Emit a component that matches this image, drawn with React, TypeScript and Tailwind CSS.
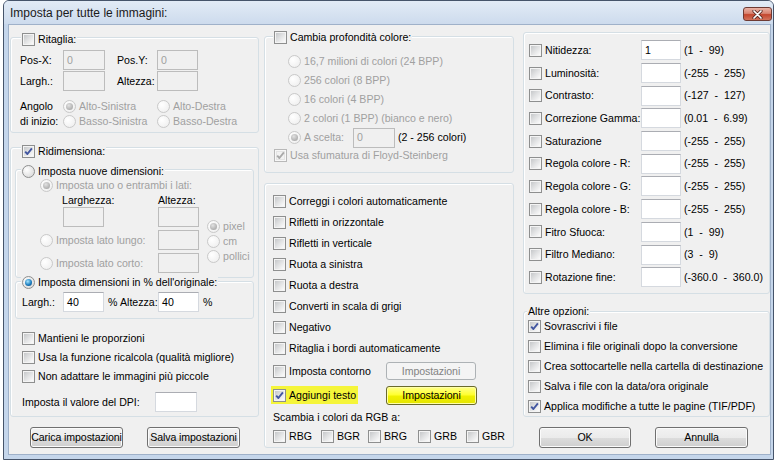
import React from "react";

const dis = "text-[#a0a0a0]";
const grp =
  "flex flex-col shrink-0 border border-[#d5dfe5] rounded-[3px] shadow-[inset_1px_1px_0_#ffffff]";

function Check({ checked = false, disabled = false }: { checked?: boolean; disabled?: boolean }) {
  return (
    <span
      className={`relative flex w-[13px] h-[13px] shrink-0 border p-[1px] ${
        disabled ? "border-[#b8b8b8] bg-[#f7f7f7]" : "border-[#8e8f8f] bg-[#f4f4f4]"
      }`}
    >
      <span
        className={`flex-1 ${
          disabled
            ? "bg-[#f2f2f2] border border-[#e4e4e4]"
            : "bg-[linear-gradient(135deg,#c6c8ca_0%,#e2e3e4_50%,#fbfbfb_100%)]"
        }`}
      />
      {checked && (
        <svg className="absolute left-[1px] top-[1px]" width="9" height="9" viewBox="0 0 9 9">
          <path
            d="M1.2 4.6 L3.4 7 L7.9 1.4"
            fill="none"
            stroke={disabled ? "#a9a9a9" : "#4256a0"}
            strokeWidth="1.9"
            strokeLinejoin="round"
          />
        </svg>
      )}
    </span>
  );
}

function Radio({ on = false, disabled = false }: { on?: boolean; disabled?: boolean }) {
  return (
    <span
      className={`flex items-center justify-center w-[13px] h-[13px] shrink-0 rounded-full border ${
        disabled
          ? "border-[#c9c9c9] bg-[radial-gradient(circle_at_35%_35%,#ffffff,#ececec)]"
          : "border-[#8e8f8f] bg-[radial-gradient(circle_at_35%_35%,#ffffff,#d3d3d3)]"
      }`}
    >
      {on && (
        <span
          className={`w-[7px] h-[7px] rounded-full ${
            disabled
              ? "bg-[radial-gradient(circle_at_40%_35%,#e2e2e2,#9a9a9a)]"
              : "bg-[radial-gradient(circle_at_40%_35%,#a8e6ff,#1d7fc0_55%,#0b3a6c)]"
          }`}
        />
      )}
    </span>
  );
}

function Opt({
  label,
  on = false,
  disabled = false,
  cls = "",
}: {
  label: string;
  on?: boolean;
  disabled?: boolean;
  cls?: string;
}) {
  return (
    <span className={`flex items-center gap-[3px] whitespace-nowrap ${cls}`}>
      <Radio on={on} disabled={disabled} />
      <span className={disabled ? dis : ""}>{label}</span>
    </span>
  );
}

function CbRow({
  label,
  checked = false,
  disabled = false,
  cls = "",
}: {
  label: string;
  checked?: boolean;
  disabled?: boolean;
  cls?: string;
}) {
  return (
    <div className={`flex items-center gap-[3px] whitespace-nowrap ${cls}`}>
      <Check checked={checked} disabled={disabled} />
      <span className={disabled ? dis : ""}>{label}</span>
    </div>
  );
}

function Box({ w, value = "", disabled = false, h = "h-[20px]" }: { w: string; value?: string; disabled?: boolean; h?: string }) {
  return (
    <span
      className={`flex items-center shrink-0 px-[3px] border ${h} ${w} ${
        disabled
          ? "border-[#bcbcbc] bg-[#f0f0f0] text-[#a0a0a0]"
          : "border-[#d5d9df] border-t-[#abadb3] bg-white text-black"
      }`}
    >
      {value}
    </span>
  );
}

function Btn({
  children,
  w,
  h = "h-[21px]",
  kind = "normal",
}: {
  children: React.ReactNode;
  w: string;
  h?: string;
  kind?: "normal" | "disabled" | "yellow";
}) {
  const k =
    kind === "disabled"
      ? "border-[#adb2b5] bg-[#f4f4f4] text-[#838383]"
      : kind === "yellow"
      ? "border-[#6a6a2c] bg-[linear-gradient(#ffff8c_0%,#ffff30_45%,#f0f000_55%,#e4e400_100%)] shadow-[inset_0_0_0_1px_#ffffa8]"
      : "border-[#707070] bg-[linear-gradient(#f2f2f2_0%,#ebebeb_50%,#dddddd_50%,#cfcfcf_100%)] shadow-[inset_0_0_0_1px_#fbfbfb]";
  return (
    <span
      className={`flex items-center justify-center shrink-0 whitespace-nowrap rounded-[3px] border tracking-[-0.1px] ${w} ${h} ${k}`}
    >
      {children}
    </span>
  );
}

function Adj({ label, value = "", range }: { label: string; value?: string; range: string }) {
  return (
    <div className="flex items-center h-[22.7px] whitespace-nowrap">
      <Check />
      <span className="ml-[3px] w-[96px]">{label}</span>
      <Box w="w-[40px]" value={value} />
      <span className="ml-[3px] whitespace-pre">{range}</span>
    </div>
  );
}

export default function App() {
  return (
    <div className="w-[778px] h-[461px] bg-white overflow-hidden font-['Liberation_Sans',Arial,sans-serif] text-[10.6px] text-black leading-none">
      <div className="ml-[3px] w-[771px] h-[460px] flex flex-col border border-[#46546a] rounded-t-[6px] bg-[#c5d6eb]">
        {/* title bar */}
        <div className="h-[23px] shrink-0 flex items-start rounded-t-[5px] bg-[linear-gradient(#e2ebf6,#cddbed)]">
          <span className="ml-[6px] mt-[6px] text-[12px] text-[#1a1a1a] whitespace-nowrap">
            Imposta per tutte le immagini:
          </span>
          <span className="ml-auto mr-[1px] mt-[6px] w-[29px] h-[14px] flex items-center justify-center rounded-[3px] border border-[#6e3a33] bg-[linear-gradient(#eab3a6_0%,#d98472_45%,#c4462e_55%,#d2735c_100%)]">
            <svg width="11" height="9" viewBox="0 0 11 9">
              <path d="M2 1 L9 8 M9 1 L2 8" stroke="#5a2a24" strokeWidth="3.2" strokeLinecap="round" />
              <path d="M2 1 L9 8 M9 1 L2 8" stroke="#ffffff" strokeWidth="1.7" strokeLinecap="round" />
            </svg>
          </span>
        </div>

        {/* client area */}
        <div className="ml-[4px] w-[763px] h-[431px] shrink-0 flex border border-[#9fb1c9] bg-[#f0f0f0] pl-[1px]">
          {/* LEFT COLUMN */}
          <div className="w-[249px] shrink-0 flex flex-col">
            <div className={`${grp} mt-[12px] h-[96px]`}>
              <div className="-mt-[5px] ml-[10px] w-fit px-[1px] h-[13px] flex items-center gap-[3px] bg-[#f0f0f0]">
                <Check />
                <span>Ritaglia:</span>
              </div>
              <div className="mt-[4px] ml-[9px] flex items-center h-[20px]">
                <span className="w-[43px]">Pos-X:</span>
                <Box w="w-[42px]" value="0" disabled />
                <span className="ml-[12px] w-[40px]">Pos.Y:</span>
                <Box w="w-[41px]" value="0" disabled />
              </div>
              <div className="mt-[1px] ml-[9px] flex items-center h-[20px]">
                <span className="w-[43px]">Largh.:</span>
                <Box w="w-[42px]" disabled />
                <span className="ml-[12px] w-[40px]">Altezza:</span>
                <Box w="w-[41px]" disabled />
              </div>
              <div className="mt-[8px] ml-[9px] grid grid-cols-[43px_94px_auto] grid-rows-[15px_15px] items-center">
                <span>Angolo</span>
                <Opt label="Alto-Sinistra" on disabled />
                <Opt label="Alto-Destra" disabled />
                <span className="whitespace-nowrap">di inizio:</span>
                <Opt label="Basso-Sinistra" disabled />
                <Opt label="Basso-Destra" disabled />
              </div>
            </div>

            <div className={`${grp} mt-[14px] h-[270px]`}>
              <div className="-mt-[3px] ml-[10px] w-fit px-[1px] h-[13px] flex items-center gap-[3px] bg-[#f0f0f0]">
                <Check checked />
                <span>Ridimensiona:</span>
              </div>

              <div className={`${grp} mt-[11px] mx-[4px] h-[109px]`}>
                <div className="-mt-[5px] ml-[5px] w-fit px-[1px] h-[13px] flex items-center bg-[#f0f0f0]">
                  <Opt label="Imposta nuove dimensioni:" />
                </div>
                <div className="h-[15px] pl-[24px] flex items-center">
                  <Opt label="Imposta uno o entrambi i lati:" on disabled />
                </div>
                <div className="h-[14px] pl-[46px] flex items-center">
                  <span className="w-[96px]">Larghezza:</span>
                  <span>Altezza:</span>
                </div>
                <div className="flex">
                  <div className="pl-[24px] grid grid-cols-[118px_41px] grid-rows-[20px_20px_20px] gap-y-[3px] items-center">
                    <div className="pl-[23px]">
                      <Box w="w-[41px]" disabled />
                    </div>
                    <Box w="w-[41px]" disabled />
                    <Opt label="Imposta lato lungo:" disabled />
                    <Box w="w-[41px]" disabled />
                    <Opt label="Imposta lato corto:" disabled />
                    <Box w="w-[41px]" disabled />
                  </div>
                  <div className="ml-[8px] mt-[12px] flex flex-col">
                    <Opt label="pixel" on disabled cls="h-[15px]" />
                    <Opt label="cm" disabled cls="h-[15px]" />
                    <Opt label="pollici" disabled cls="h-[15px]" />
                  </div>
                </div>
              </div>

              <div className={`${grp} mt-[3px] mx-[4px] h-[38px]`}>
                <div className="-mt-[6px] ml-[5px] w-fit px-[1px] h-[13px] flex items-center bg-[#f0f0f0]">
                  <Opt label="Imposta dimensioni in % dell'originale:" on />
                </div>
                <div className="mt-[3px] h-[20px] pl-[6px] flex items-center whitespace-nowrap">
                  <span className="w-[41px]">Largh.:</span>
                  <Box w="w-[41px]" value="40" />
                  <span className="ml-[4px] w-[12px]">%</span>
                  <span className="w-[38px]">Altezza:</span>
                  <Box w="w-[41px]" value="40" />
                  <span className="ml-[4px]">%</span>
                </div>
              </div>

              <div className="mt-[10px] pl-[11px] flex flex-col">
                <CbRow label="Mantieni le proporzioni" cls="h-[19px]" />
                <CbRow label="Usa la funzione ricalcola (qualità migliore)" cls="h-[19px]" />
                <CbRow label="Non adattare le immagini più piccole" cls="h-[19px]" />
              </div>
              <div className="mt-[6px] pl-[11px] h-[20px] flex items-center">
                <span className="w-[133px] whitespace-nowrap">Imposta il valore del DPI:</span>
                <Box w="w-[42px]" />
              </div>
            </div>

            <div className="mt-[10px] pl-[20px] flex gap-[24px]">
              <Btn w="w-[93px]">Carica impostazioni</Btn>
              <Btn w="w-[93px]">Salva impostazioni</Btn>
            </div>
          </div>

          {/* MIDDLE COLUMN */}
          <div className="ml-[5px] w-[250px] shrink-0 flex flex-col">
            <div className={`${grp} mt-[11px] h-[137px]`}>
              <div className="-mt-[6px] ml-[8px] w-fit px-[1px] h-[13px] flex items-center gap-[3px] bg-[#f0f0f0]">
                <Check />
                <span>Cambia profondità colore:</span>
              </div>
              <div className="mt-[8px] pl-[23px] flex flex-col">
                <Opt label="16,7 milioni di colori (24 BPP)" disabled cls="h-[19px]" />
                <Opt label="256 colori (8 BPP)" disabled cls="h-[19px]" />
                <Opt label="16 colori (4 BPP)" disabled cls="h-[19px]" />
                <Opt label="2 colori (1 BPP) (bianco e nero)" disabled cls="h-[19px]" />
                <div className="h-[19px] flex items-center whitespace-nowrap">
                  <Radio on disabled />
                  <span className={`ml-[3px] w-[49px] ${dis}`}>A scelta:</span>
                  <Box w="w-[42px]" value="0" disabled />
                  <span className="ml-[3px]">(2 - 256 colori)</span>
                </div>
              </div>
              <CbRow label="Usa sfumatura di Floyd-Steinberg" checked disabled cls="h-[17px] pl-[9px]" />
            </div>

            <div className={`${grp} mt-[10px] h-[265px] pt-[7px] pl-[8px]`}>
              <CbRow label="Correggi i colori automaticamente" cls="h-[21px]" />
              <CbRow label="Rifletti in orizzontale" cls="h-[21px]" />
              <CbRow label="Rifletti in verticale" cls="h-[21px]" />
              <CbRow label="Ruota a sinistra" cls="h-[21px]" />
              <CbRow label="Ruota a destra" cls="h-[21px]" />
              <CbRow label="Converti in scala di grigi" cls="h-[21px]" />
              <CbRow label="Negativo" cls="h-[21px]" />
              <CbRow label="Ritaglia i bordi automaticamente" cls="h-[21px]" />
              <div className="h-[24px] flex items-center">
                <CbRow label="Imposta contorno" cls="w-[113px]" />
                <Btn w="w-[90px]" h="h-[18px]" kind="disabled">
                  Impostazioni
                </Btn>
              </div>
              <div className="h-[24px] flex items-center">
                <div className="w-[113px] flex">
                  <span className="-ml-[2px] px-[2px] h-[18px] flex items-center gap-[3px] bg-[#f5f53a] whitespace-nowrap">
                    <Check checked />
                    <span>Aggiungi testo</span>
                  </span>
                </div>
                <Btn w="w-[91px]" h="h-[19px]" kind="yellow">
                  Impostazioni
                </Btn>
              </div>
              <div className="h-[20px] flex items-center whitespace-nowrap">Scambia i colori da RGB a:</div>
              <div className="h-[18px] flex items-center">
                <CbRow label="RBG" cls="w-[48px]" />
                <CbRow label="BGR" cls="w-[47px]" />
                <CbRow label="BRG" cls="w-[50px]" />
                <CbRow label="GRB" cls="w-[48px]" />
                <CbRow label="GBR" />
              </div>
            </div>
          </div>

          {/* RIGHT COLUMN */}
          <div className="ml-[9px] w-[247px] shrink-0 flex flex-col">
            <div className={`${grp} mt-[7px] h-[262px] pt-[6px] pl-[5px]`}>
              <Adj label="Nitidezza:" value="1" range="(1  -  99)" />
              <Adj label="Luminosità:" range="(-255  -  255)" />
              <Adj label="Contrasto:" range="(-127  -  127)" />
              <Adj label="Correzione Gamma:" range="(0.01  -  6.99)" />
              <Adj label="Saturazione" range="(-255  -  255)" />
              <Adj label="Regola colore - R:" range="(-255  -  255)" />
              <Adj label="Regola colore - G:" range="(-255  -  255)" />
              <Adj label="Regola colore - B:" range="(-255  -  255)" />
              <Adj label="Fitro Sfuoca:" range="(1  -  99)" />
              <Adj label="Filtro Mediano:" range="(3  -  9)" />
              <Adj label="Rotazione fine:" range="(-360.0  -  360.0)" />
            </div>

            <div className={`${grp} mt-[17px] h-[106px]`}>
              <div className="-mt-[7px] ml-[3px] w-fit px-[1px] h-[14px] flex items-center bg-[#f0f0f0] whitespace-nowrap">
                Altre opzioni:
              </div>
              <div className="-mt-[2px] pl-[4px] flex flex-col">
                <CbRow label="Sovrascrivi i file" checked cls="h-[20px]" />
                <CbRow label="Elimina i file originali dopo la conversione" cls="h-[20px]" />
                <CbRow label="Crea sottocartelle nella cartella di destinazione" cls="h-[20px]" />
                <CbRow label="Salva i file con la data/ora originale" cls="h-[20px]" />
                <CbRow label="Applica modifiche a tutte le pagine (TIF/PDF)" checked cls="h-[20px]" />
              </div>
            </div>

            <div className="mt-[10px] pl-[16px] flex gap-[24px]">
              <Btn w="w-[92px]">OK</Btn>
              <Btn w="w-[93px]">Annulla</Btn>
            </div>
          </div>
        </div>
      </div>
    </div>
  );
}
